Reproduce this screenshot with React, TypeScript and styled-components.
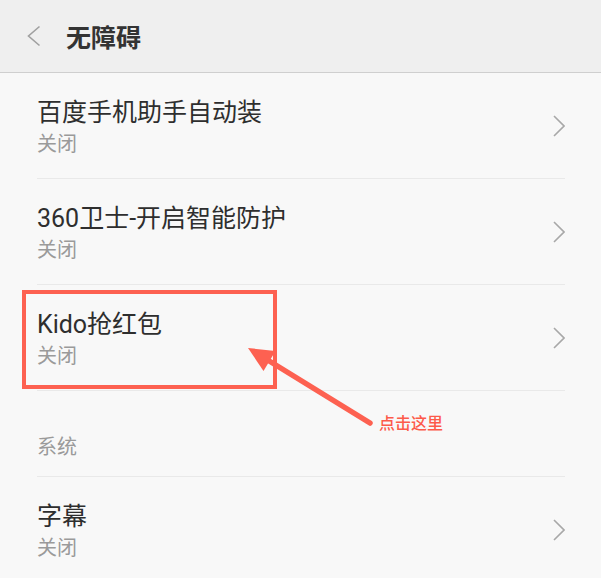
import React from "react";
import styled, { createGlobalStyle } from "styled-components";

const GlobalStyle = createGlobalStyle`
  html, body {
    margin: 0;
    padding: 0;
    background: #f8f8f8;
    font-family: Roboto, "Noto Sans CJK SC", "Noto Sans", sans-serif;
  }
  * { box-sizing: border-box; }
`;

const Page = styled.div`
  position: relative;
  width: 601px;
  height: 578px;
  overflow: hidden;
  background: #f8f8f8;
`;

const Header = styled.header`
  display: flex;
  align-items: center;
  height: 73px;
  padding-left: 27px;
  background: #efefef;
  border-bottom: 1px solid #cfcfcf;
`;

const BackButton = styled.svg`
  width: 14px;
  height: 22px;
  margin-right: 25px;
  flex-shrink: 0;
`;

const HeaderTitle = styled.h1`
  margin: 0;
  font-size: 25px;
  font-weight: 700;
  line-height: 30px;
  color: #333333;
  font-family: "Noto Sans CJK SC", sans-serif;
`;

const List = styled.div`
  display: flex;
  flex-direction: column;
  padding: 0 36px 0 37px;
`;

const Row = styled.div`
  display: flex;
  align-items: center;
  height: 106px;
  border-bottom: 1px solid #e9e9e9;
`;

const RowText = styled.div`
  flex: 1;
  display: flex;
  flex-direction: column;
  align-self: flex-start;
  padding-top: 25px;
`;

const RowTitle = styled.div`
  font-size: 25px;
  line-height: 30px;
  color: #2e2e2e;
`;

const RowSub = styled.div`
  margin-top: 3px;
  font-size: 20px;
  line-height: 24px;
  color: #9a9a9a;
  font-family: "Noto Sans CJK SC", sans-serif;
`;

const Chevron = styled.svg`
  width: 12px;
  height: 22px;
  flex-shrink: 0;
`;

const SectionHeader = styled.div`
  height: 86px;
  padding-top: 43px;
  font-size: 20px;
  line-height: 24px;
  color: #9a9a9a;
  border-bottom: 1px solid #e9e9e9;
  font-family: "Noto Sans CJK SC", sans-serif;
`;

const Highlight = styled.div`
  position: absolute;
  left: 22px;
  top: 290px;
  width: 255px;
  height: 99px;
  border: 4px solid #fd6151;
  pointer-events: none;
`;

const ArrowLayer = styled.svg`
  position: absolute;
  left: 0;
  top: 0;
  width: 601px;
  height: 578px;
  pointer-events: none;
`;

const Callout = styled.div`
  position: absolute;
  left: 379px;
  top: 412px;
  font-size: 16px;
  line-height: 20px;
  font-weight: 500;
  color: #fd5a4a;
  font-family: "Noto Sans CJK SC", sans-serif;
`;

const RightChevron = () => (
  <Chevron viewBox="0 0 12 22">
    <polyline points="1,1 11,11 1,21" fill="none" stroke="#a8a8a8" strokeWidth="1.6" />
  </Chevron>
);

type Item = { title: string; sub: string };

const items: Item[] = [
  { title: "百度手机助手自动装", sub: "关闭" },
  { title: "360卫士-开启智能防护", sub: "关闭" },
  { title: "Kido抢红包", sub: "关闭" },
];

const SettingRow = ({ title, sub }: Item) => (
  <Row>
    <RowText>
      <RowTitle>{title}</RowTitle>
      <RowSub>{sub}</RowSub>
    </RowText>
    <RightChevron />
  </Row>
);

export default function App() {
  return (
    <Page>
      <GlobalStyle />
      <Header>
        <BackButton viewBox="0 0 14 22">
          <polyline points="12.5,1.5 1.5,11 12.5,20.5" fill="none" stroke="#a0a0a0" strokeWidth="1.6" />
        </BackButton>
        <HeaderTitle>无障碍</HeaderTitle>
      </Header>
      <List>
        {items.map((it) => (
          <SettingRow key={it.title} {...it} />
        ))}
        <SectionHeader>系统</SectionHeader>
        <SettingRow title="字幕" sub="关闭" />
      </List>
      <Highlight />
      <ArrowLayer viewBox="0 0 601 578">
        <line x1="370" y1="423" x2="266" y2="359" stroke="#fd6151" strokeWidth="5.5" strokeLinecap="round" />
        <polygon points="248,348 275.5,351 263.5,371" fill="#fd6151" />
      </ArrowLayer>
      <Callout>点击这里</Callout>
    </Page>
  );
}
